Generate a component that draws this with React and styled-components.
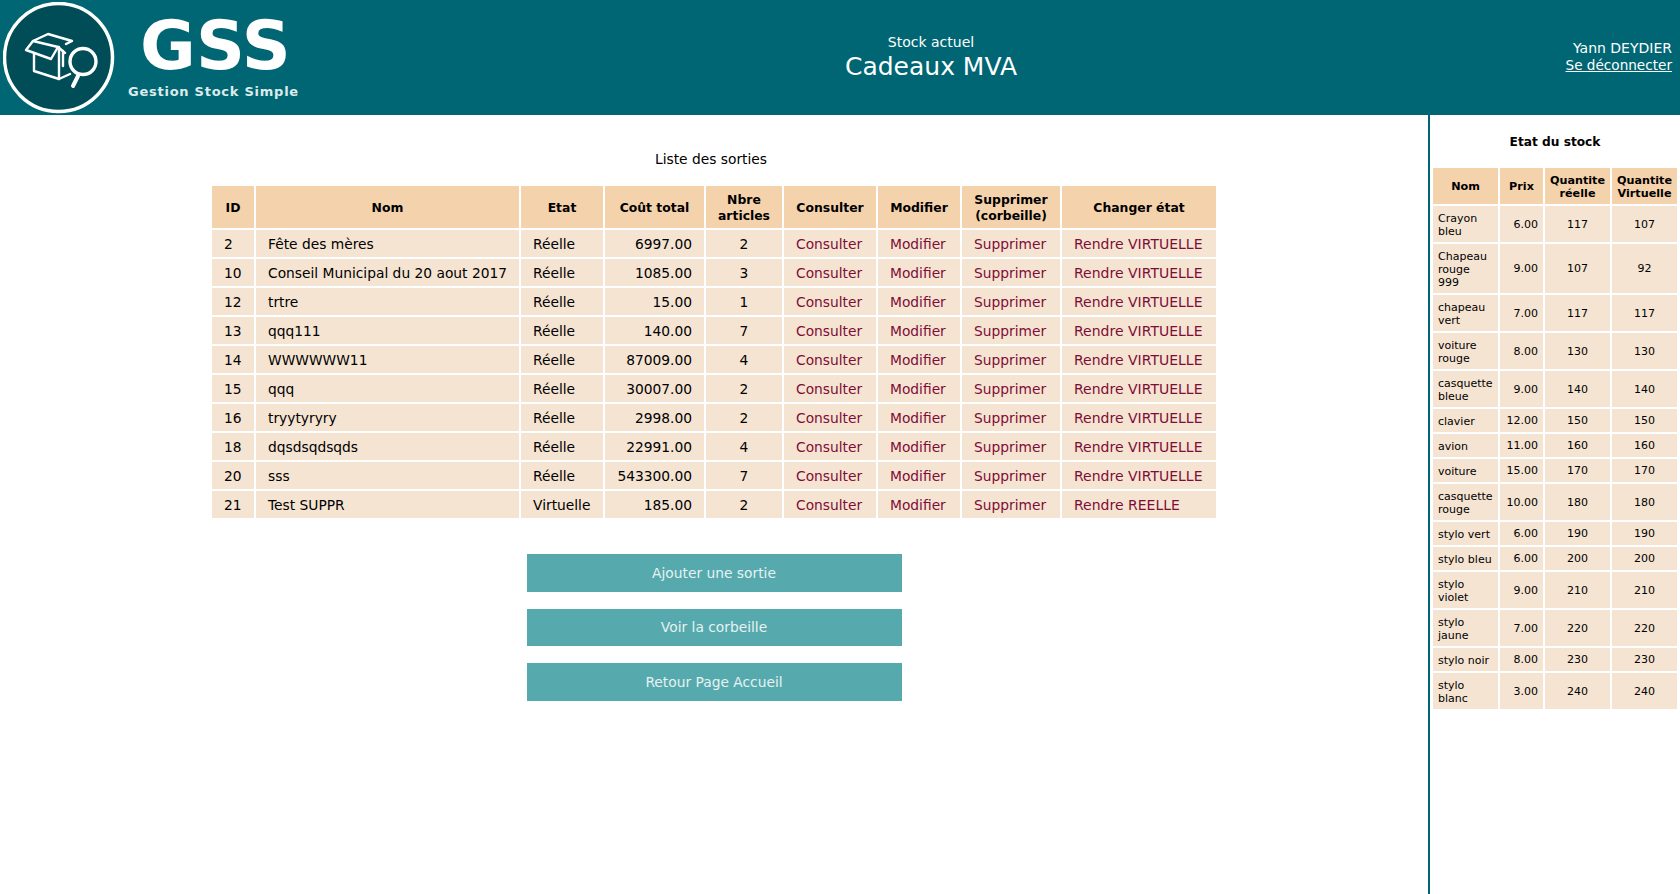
import React from 'react';
import styled, { createGlobalStyle } from 'styled-components';

const GlobalStyle = createGlobalStyle`
  html, body {
    margin: 0;
    padding: 0;
    background: #fff;
    font-family: "DejaVu Sans", Verdana, sans-serif;
    color: #000;
  }
`;

const Page = styled.div`
  height: 894px;
  display: flex;
  flex-direction: column;
  overflow: hidden;
`;

const Header = styled.header`
  height: 115px;
  flex: none;
  display: grid;
  grid-template-columns: 320px 1fr 138px;
  align-items: center;
  background: #006673;
  color: #fff;
`;

const Brand = styled.div`
  display: flex;
  align-items: center;
  height: 115px;
  padding-left: 3px;
`;

const LogoText = styled.div`
  display: flex;
  flex-direction: column;
  align-items: center;
  margin-left: 13px;
  margin-top: -2px;
`;

const LogoTitle = styled.div`
  font-size: 68px;
  font-weight: 700;
  line-height: 66px;
  margin-left: 4px;
`;

const LogoSubtitle = styled.div`
  font-size: 13px;
  font-weight: 700;
  letter-spacing: 0.75px;
  line-height: 16px;
  margin-top: 5px;
  color: #dcebec;
`;

const StockInfo = styled.div`
  text-align: center;
  margin-top: -1px;
`;

const StockLabel = styled.div`
  font-size: 14px;
  line-height: 16px;
`;

const StockName = styled.div`
  font-size: 25px;
  line-height: 28px;
  margin-top: 3px;
`;

const UserBox = styled.div`
  text-align: right;
  padding-right: 8px;
  font-size: 14px;
  line-height: 17px;
  margin-top: -2px;
  white-space: nowrap;
`;

const LogoutLink = styled.a`
  color: #fff;
  font-size: 13.6px;
  text-decoration: underline;
`;

const Body = styled.div`
  flex: 1;
  display: flex;
  min-height: 0;
`;

const Main = styled.main`
  width: 1428px;
  flex: none;
  display: flex;
  flex-direction: column;
  align-items: center;
`;

const Title = styled.div`
  font-size: 13.8px;
  line-height: 17px;
  margin-top: 36px;
  margin-left: -6px;
  height: 19px;
`;

const Table = styled.table`
  width: ${(p) => p.$width}px;
  border-collapse: separate;
  border-spacing: 2px;
  table-layout: fixed;
  margin-top: 14px;
  font-size: ${(p) => p.$size}px;
  line-height: ${(p) => p.$line}px;
`;

const HeadCell = styled.th`
  background: #f4d3ac;
  font-weight: 700;
  font-size: ${(p) => p.$size}px;
  line-height: ${(p) => p.$line}px;
  padding: 1px 0 0;
  text-align: center;
  height: ${(p) => p.$height}px;
  box-sizing: border-box;
`;

const Cell = styled.td`
  background: #f5e4d2;
  padding: ${(p) => p.$pad};
  text-align: ${(p) => p.$align || 'left'};
  height: ${(p) => p.$height}px;
  box-sizing: border-box;
`;

const MainCell = styled(Cell)`
  white-space: nowrap;
`;

const RowLink = styled.a`
  color: #7f0c36;
  text-decoration: none;
`;

const StateLink = styled(RowLink)`
  font-size: 14px;
`;

const ButtonStack = styled.div`
  display: flex;
  flex-direction: column;
  gap: 17px;
  margin-top: 34px;
`;

const ActionButton = styled.button`
  width: 375px;
  height: 37.5px;
  border: none;
  background: #56aaad;
  color: #e6f2f2;
  font-family: inherit;
  font-size: 13.8px;
  padding: 0;
`;

const Sidebar = styled.aside`
  flex: 1;
  border-left: 2px solid #006673;
  display: flex;
  flex-direction: column;
  align-items: center;
`;

const SidebarTitle = styled.div`
  font-size: 12.2px;
  font-weight: 700;
  line-height: 16px;
  margin-top: 19px;
  height: 18px;
`;

const Logo = () => (
  <svg width="112" height="112" viewBox="3 1 112 112">
    <circle cx="58.5" cy="56.5" r="54" fill="#004d57" stroke="#fff" strokeWidth="3.5" />
    <g fill="none" stroke="#fff" strokeWidth="2.4" strokeLinejoin="round" strokeLinecap="round">
      {/* open flaps */}
      <path d="M33 40 L48 33 L72 40 L66 43" />
      <path d="M33 40 L58 46 L51 58 L26 49 Z" />
      {/* box body */}
      <path d="M34 53 L34 70 L59 78 L70 73" />
      <path d="M59 46 L59 78" />
      <path d="M63 50 L63 65" />
      <path d="M58 46 L65 52" />
      {/* magnifier */}
      <circle cx="83" cy="60.5" r="13" strokeWidth="3.4" />
      <path d="M78 75 L73 85" strokeWidth="4" />
    </g>
  </svg>
);

const columns = [
  { label: 'ID', width: 42 },
  { label: 'Nom', width: 263 },
  { label: 'Etat', width: 82 },
  { label: 'Coût total', width: 99 },
  { label: <>Nbre<br />articles</>, width: 76 },
  { label: 'Consulter', width: 92 },
  { label: 'Modifier', width: 82 },
  { label: <>Supprimer<br />(corbeille)</>, width: 98 },
  { label: 'Changer état', width: 154 },
];

const sorties = [
  [2, 'Fête des mères', 'Réelle', '6997.00', 2],
  [10, 'Conseil Municipal du 20 aout 2017', 'Réelle', '1085.00', 3],
  [12, 'trtre', 'Réelle', '15.00', 1],
  [13, 'qqq111', 'Réelle', '140.00', 7],
  [14, 'WWWWWW11', 'Réelle', '87009.00', 4],
  [15, 'qqq', 'Réelle', '30007.00', 2],
  [16, 'tryytyryry', 'Réelle', '2998.00', 2],
  [18, 'dqsdsqdsqds', 'Réelle', '22991.00', 4],
  [20, 'sss', 'Réelle', '543300.00', 7],
  [21, 'Test SUPPR', 'Virtuelle', '185.00', 2],
];

const sideColumns = [
  { label: 'Nom', width: 65 },
  { label: 'Prix', width: 43 },
  { label: <>Quantite<br />réelle</>, width: 65 },
  { label: <>Quantite<br />Virtuelle</>, width: 65 },
];

const stock = [
  ['Crayon bleu', '6.00', 117, 107],
  ['Chapeau rouge 999', '9.00', 107, 92],
  ['chapeau vert', '7.00', 117, 117],
  ['voiture rouge', '8.00', 130, 130],
  ['casquette bleue', '9.00', 140, 140],
  ['clavier', '12.00', 150, 150],
  ['avion', '11.00', 160, 160],
  ['voiture', '15.00', 170, 170],
  ['casquette rouge', '10.00', 180, 180],
  ['stylo vert', '6.00', 190, 190],
  ['stylo bleu', '6.00', 200, 200],
  ['stylo violet', '9.00', 210, 210],
  ['stylo jaune', '7.00', 220, 220],
  ['stylo noir', '8.00', 230, 230],
  ['stylo blanc', '3.00', 240, 240],
];

const App = () => (
  <Page>
    <GlobalStyle />
    <Header>
      <Brand>
        <Logo />
        <LogoText>
          <LogoTitle>GSS</LogoTitle>
          <LogoSubtitle>Gestion Stock Simple</LogoSubtitle>
        </LogoText>
      </Brand>
      <StockInfo>
        <StockLabel>Stock actuel</StockLabel>
        <StockName>Cadeaux MVA</StockName>
      </StockInfo>
      <UserBox>
        <div>Yann DEYDIER</div>
        <LogoutLink href="#">Se déconnecter</LogoutLink>
      </UserBox>
    </Header>
    <Body>
      <Main>
        <Title>Liste des sorties</Title>
        <Table $width={1008} $size={13.8} $line={17}>
          <colgroup>
            {columns.map((c, i) => <col key={i} style={{ width: c.width }} />)}
          </colgroup>
          <thead>
            <tr>
              {columns.map((c, i) => <HeadCell key={i} $height={42} $size={12.4} $line={16}>{c.label}</HeadCell>)}
            </tr>
          </thead>
          <tbody>
            {sorties.map((s) => (
              <tr key={s[0]}>
                <MainCell $pad="1px 12px 0" $height={27}>{s[0]}</MainCell>
                <MainCell $pad="1px 12px 0" $height={27}>{s[1]}</MainCell>
                <MainCell $pad="1px 12px 0" $height={27}>{s[2]}</MainCell>
                <MainCell $pad="1px 12px 0 0" $height={27} $align="right">{s[3]}</MainCell>
                <MainCell $pad="1px 0 0" $height={27} $align="center">{s[4]}</MainCell>
                <MainCell $pad="1px 12px 0" $height={27}><RowLink href="#">Consulter</RowLink></MainCell>
                <MainCell $pad="1px 12px 0" $height={27}><RowLink href="#">Modifier</RowLink></MainCell>
                <MainCell $pad="1px 12px 0" $height={27}><RowLink href="#">Supprimer</RowLink></MainCell>
                <MainCell $pad="1px 12px 0" $height={27}>
                  <StateLink href="#">{s[2] === 'Réelle' ? 'Rendre VIRTUELLE' : 'Rendre REELLE'}</StateLink>
                </MainCell>
              </tr>
            ))}
          </tbody>
        </Table>
        <ButtonStack>
          <ActionButton>Ajouter une sortie</ActionButton>
          <ActionButton>Voir la corbeille</ActionButton>
          <ActionButton>Retour Page Accueil</ActionButton>
        </ButtonStack>
      </Main>
      <Sidebar>
        <SidebarTitle>Etat du stock</SidebarTitle>
        <Table $width={248} $size={11} $line={13}>
          <colgroup>
            {sideColumns.map((c, i) => <col key={i} style={{ width: c.width }} />)}
          </colgroup>
          <thead>
            <tr>
              {sideColumns.map((c, i) => <HeadCell key={i} $height={36} $size={11.2} $line={13}>{c.label}</HeadCell>)}
            </tr>
          </thead>
          <tbody>
            {stock.map((s) => (
              <tr key={s[0]}>
                <Cell $pad="6px 5px 4px">{s[0]}</Cell>
                <Cell $pad="5px 5px 5px 0" $align="right">{s[1]}</Cell>
                <Cell $pad="5px 0" $align="center">{s[2]}</Cell>
                <Cell $pad="5px 0" $align="center">{s[3]}</Cell>
              </tr>
            ))}
          </tbody>
        </Table>
      </Sidebar>
    </Body>
  </Page>
);

export default App;
